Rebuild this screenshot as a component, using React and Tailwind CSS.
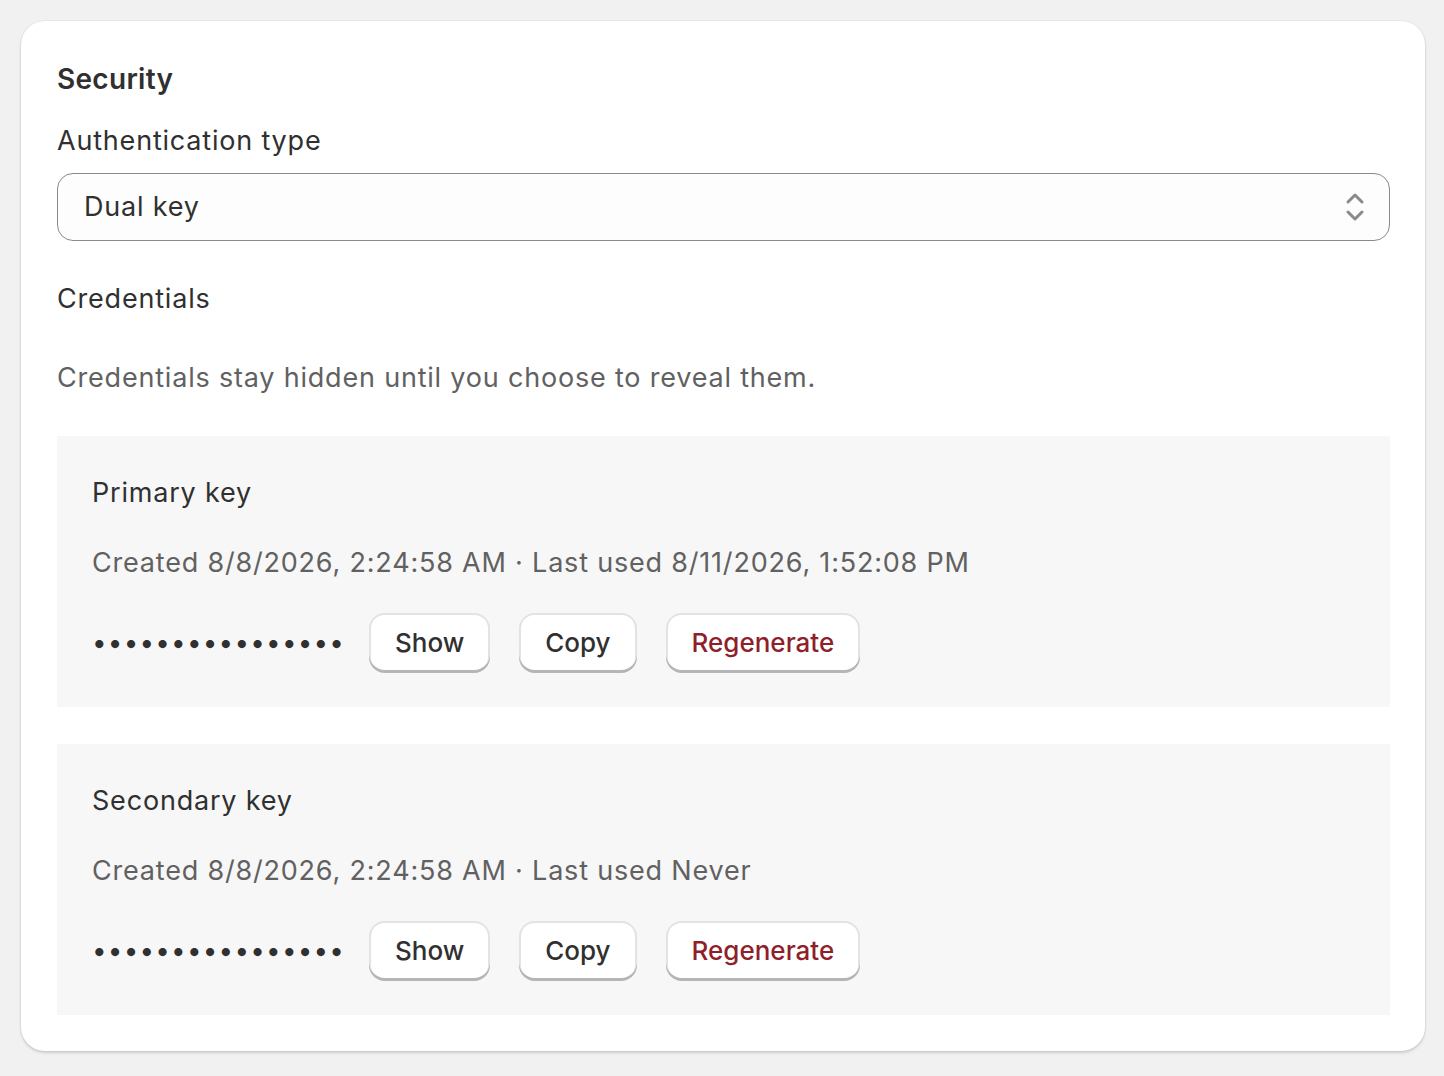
import React from "react";

const font = { fontFamily: "Inter, 'Noto Sans', sans-serif" };

function Btn({ children, critical }) {
  return (
    <button
      className={
        "h-[60px] px-[26px] rounded-[16px] bg-white text-[26px] font-medium leading-none shadow-[inset_0_-3px_0_#b5b5b5,inset_2px_0_0_#e3e3e3,inset_-2px_0_0_#e3e3e3,inset_0_2px_0_#e3e3e3] " +
        (critical ? "text-[#8e1f2b]" : "text-[#303030]")
      }
    >
      {children}
    </button>
  );
}

function KeyPanel({ title, meta }) {
  return (
    <div className="bg-[#f7f7f7] pt-[37px] pb-[34px] px-[35px]">
      <div className="text-[27px] tracking-[0.8px] leading-[40px] text-[#303030]">{title}</div>
      <div className="mt-[30px] text-[27px] tracking-[0.8px] leading-[40px] text-[#616161]">{meta}</div>
      <div className="mt-[30px] flex items-center gap-[29px]">
        <span className="text-[26px] leading-[40px] text-[#303030] tracking-[1.2px] w-[248px] whitespace-nowrap">
          ••••••••••••••••
        </span>
        <Btn>Show</Btn>
        <Btn>Copy</Btn>
        <Btn critical>Regenerate</Btn>
      </div>
    </div>
  );
}

export default function App() {
  return (
    <div className="min-h-[1076px] bg-[#f1f1f1] p-[21px] pr-[19px]" style={font}>
      <div className="bg-white rounded-[24px] shadow-[0_2px_3px_rgba(0,0,0,0.14),0_0_0_1px_rgba(0,0,0,0.04)] pt-[36px] pl-[36px] pr-[35px] pb-[36px]">
        <div className="text-[28px] tracking-[0.3px] leading-[44px] font-semibold text-[#303030]">Security</div>
        <div className="mt-[20px] text-[27px] tracking-[0.8px] leading-[40px] text-[#303030]">Authentication type</div>
        <div className="mt-[12px] h-[68px] rounded-[16px] border-[1.5px] border-[#8a8a8a] bg-[#fdfdfd] flex items-center justify-between pl-[26px] pr-[22px]">
          <span className="text-[27px] tracking-[0.8px] text-[#303030]">Dual key</span>
          <svg width="24" height="32" viewBox="0 0 24 32" fill="none" stroke="#8a8a8a" strokeWidth="3" strokeLinecap="round" strokeLinejoin="round">
            <path d="M5 11 L12 4 L19 11" />
            <path d="M5 21 L12 28 L19 21" />
          </svg>
        </div>
        <div className="mt-[38px] text-[27px] tracking-[0.8px] leading-[40px] text-[#303030]">Credentials</div>
        <div className="mt-[39px] text-[27px] tracking-[0.8px] leading-[40px] text-[#616161]">
          Credentials stay hidden until you choose to reveal them.
        </div>
        <div className="mt-[38px] flex flex-col gap-[37px]">
          <KeyPanel
            title="Primary key"
            meta="Created 8/8/2026, 2:24:58 AM · Last used 8/11/2026, 1:52:08 PM"
          />
          <KeyPanel title="Secondary key" meta="Created 8/8/2026, 2:24:58 AM · Last used Never" />
        </div>
      </div>
    </div>
  );
}
